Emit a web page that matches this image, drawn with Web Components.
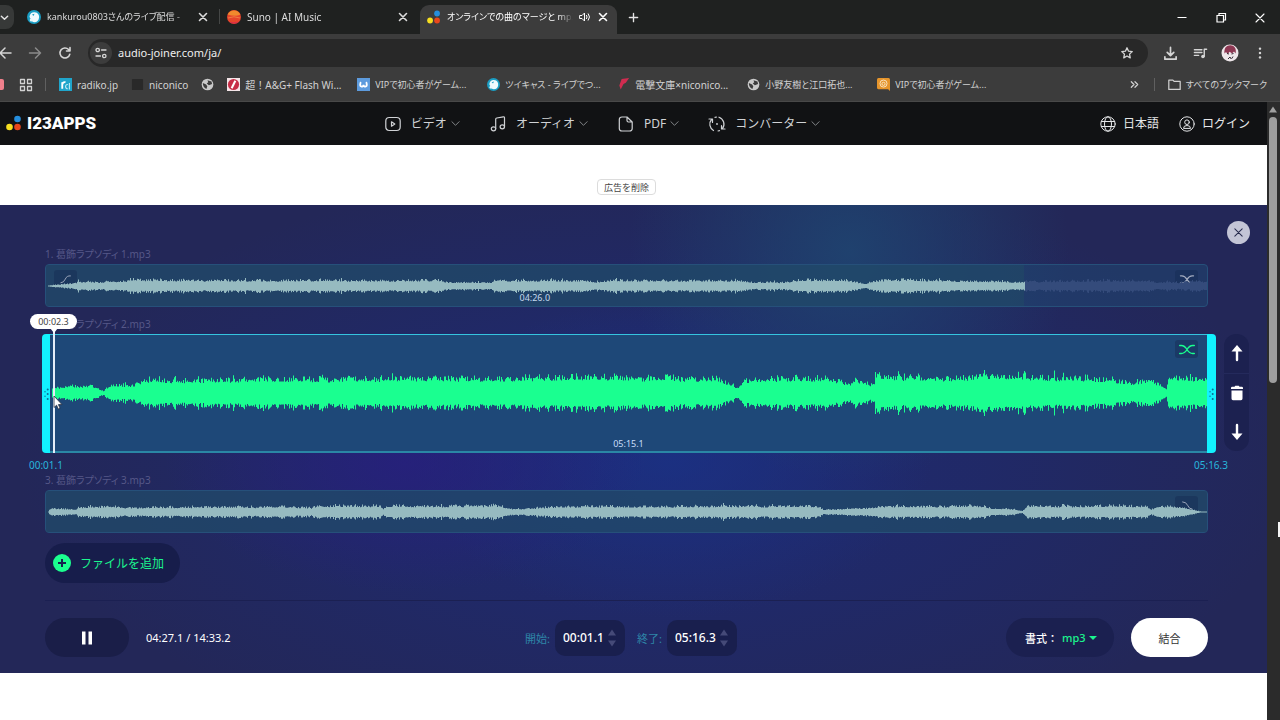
<!DOCTYPE html>
<html lang="ja">
<head>
<meta charset="utf-8">
<title>オンラインでの曲のマージと mp3</title>
<style>
  html, body { height: 100%; }
  body {
    margin: 0;
    display: flex; flex-direction: column;
    overflow: hidden;
    background: #fff;
    font-family: "Noto Sans", "Noto Sans CJK JP", sans-serif;
    font-size: 10px;
  }
  site-viewport { flex: 1; min-height: 0; }
</style>
</head>
<body>
  <browser-tabs></browser-tabs>
  <browser-toolbar></browser-toolbar>
  <bookmark-bar></bookmark-bar>
  <site-viewport>
    <site-header></site-header>
    <ad-strip></ad-strip>
    <joiner-editor></joiner-editor>
  </site-viewport>

<script>
'use strict';

// ── Icons ────────────────────────────────────────────────────────────
// [viewBox, markup]; strokes use currentColor
const LINE = 'fill="none" stroke="currentColor" stroke-linecap="round" stroke-linejoin="round"';
const ICONS = {
  chevron: ['0 0 10 10', `<path d="M1.500 3.500 5 7l3.500-3.500" ${LINE} stroke-width="1.600"/>`],
  caret: ['0 0 10 10', `<path d="M1 3l4 4 4-4" ${LINE}/>`],
  close: ['0 0 12 12', `<path d="M2.500 2.500l7 7M9.500 2.500l-7 7" ${LINE} stroke-width="1.600"/>`],
  closethin: ['0 0 12 12', `<path d="M2 2l8 8M10 2l-8 8" ${LINE} stroke-width="1.100"/>`],
  plus: ['0 0 12 12', `<path d="M6 1.500v9M1.500 6h9" ${LINE} stroke-width="1.500"/>`],
  minimize: ['0 0 12 12', `<path d="M1.500 5.500h9" stroke="currentColor"/>`],
  restore: ['0 0 12 12', `<path d="M2 3.500h6.500V10H2zM4 3.500v-2h6.500V8h-2" fill="none" stroke="currentColor" stroke-width="1.200"/>`],
  sound: ['0 0 12 12', `<path d="M1 4.500h2L5.500 2v8L3 7.500H1z" ${LINE}/><path d="M7.500 4.300q1.400 1.700 0 3.400M9.300 2.800q2.600 3.200 0 6.400" ${LINE}/>`],
  back: ['0 0 16 16', `<path d="M14 8H3M8 3 3 8l5 5" ${LINE} stroke-width="1.500"/>`],
  forward: ['0 0 16 16', `<path d="M2.500 8h11M8.500 3l5 5-5 5" ${LINE} stroke-width="1.500"/>`],
  reload: ['0 0 16 16', `<path d="M12.800 9.200A5 5 0 1 1 11.600 4.500L13 6M13 2.500V6H9.500" ${LINE} stroke-width="1.600"/>`],
  tune: ['0 0 14 14', `<circle cx="3.700" cy="4" r="1.700" ${LINE} stroke-width="1.300"/><path d="M7.500 4H12M2 10h4.500" ${LINE} stroke-width="1.300"/><circle cx="10.300" cy="10" r="1.700" ${LINE} stroke-width="1.300"/>`],
  star: ['0 0 16 16', `<path d="M8 2l1.800 3.900 4.200.5-3.100 2.900.8 4.200L8 11.400l-3.700 2.100.8-4.200L2 6.400l4.200-.5z" ${LINE} stroke-width="1.500"/>`],
  download: ['0 0 16 16', `<path d="M8 1.500v8.500M4.500 6.700 8 10.200l3.500-3.500M2 11.500V14h12v-2.500" ${LINE} stroke-width="1.800"/>`],
  queue: ['0 0 16 16', `<path d="M1.500 4h8M1.500 7h8M1.500 10h4.500M12 11V3.500h2.500" ${LINE} stroke-width="1.500"/><circle cx="10.600" cy="11.200" r="1.900" fill="currentColor"/>`],
  kebab: ['0 0 16 16', `<g fill="currentColor"><circle cx="8" cy="3" r="1.400"/><circle cx="8" cy="8" r="1.400"/><circle cx="8" cy="13" r="1.400"/></g>`],
  avatar: ['0 0 18 18', `<circle cx="9" cy="9" r="8.500" fill="#eee7ea"/><path d="M3.500 9.500C2.800 4 5.500 1.200 9.300 1.200s6.400 3 5.300 8.200L13 7.500l-2 2-2.300-1.800L6.500 10 5 8z" fill="#8d3853"/><path d="M6 9.500l2 .5m2.500 0 2-.5M9 13l1.200 2M7 15l2-2M12 12.500l-1.300 2.200" stroke="#342b35" fill="none"/>`],
  apps: ['0 0 14 14', `<path d="M1.500 1.500h4v4h-4zM8.500 1.500h4v4h-4zM1.500 8.500h4v4h-4zM8.500 8.500h4v4h-4z" ${LINE} stroke-width="1.300"/>`],
  folder: ['0 0 16 16', `<path d="M1 2.500h5l1.500 1.700H15V14H1z" ${LINE} stroke-width="1.500"/>`],
  more: ['0 0 12 12', `<path d="M2.500 3 5.500 6l-3 3M6.500 3l3 3-3 3" ${LINE} stroke-width="1.300"/>`],
  earth: ['0 0 14 14', `<circle cx="7" cy="7" r="6.300" fill="#c9c9c9"/><path d="M2 5.500 5.500 7l1.300 2-1 2.800C3.500 11 1.900 8.500 2 5.500M7 2.500l4.300 1.200.6 2.800-3.400 1.300L6.200 6l1.600-1.500z" fill="#3c3c3c"/>`],
  radiko: ['0 0 14 14', `<path d="M0 0h14v14H0z" fill="#20a5cb"/><path d="M3.500 11.500v-7M3.500 7Q4 4 7 4.500" stroke="#fff" stroke-width="2" fill="none"/><path d="M9.500 7a2 2.300 0 1 0 0 4.500M11.200 5.500v7" stroke="#bdeaf4" fill="none" stroke-width="1.200"/>`],
  blank: ['0 0 14 14', `<rect x="1" y="1" width="12" height="12" rx="1" fill="#292929"/>`],
  agqr: ['0 0 14 14', `<path d="M0 0h14v14H0z" fill="#f4e5e8"/><circle cx="7" cy="7" r="6" fill="#c72d46"/><path d="M5 11 9 3" stroke="#fff" stroke-width="2.200"/>`],
  wiki: ['0 0 14 14', `<path d="M0 0h14v14H0z" fill="#5d9bdd"/><path d="M3.800 5C2.300 9.800 6.400 10.500 7 7.500c.6 3 4.700 2.300 3.200-2.500" fill="none" stroke="#fff" stroke-linecap="round" stroke-width="1.900"/>`],
  cas: ['0 0 14 14', `<circle cx="7" cy="7" r="7" fill="#1b9ec4"/><path d="M2.500 6.500C3 3.500 5 2 7.500 2.200 11 2.500 12.500 5 12 8c-.4 2.500-2 4.200-4.500 4.200S5 11 5 10 3.300 9.500 2.500 6.500z" fill="#f0fafd"/><circle cx="4.300" cy="10" r="1.600" fill="#eaf8fb"/><path d="M5 4.500l2.500-.8-1 2.300z" fill="#1b9ec4"/>`],
  dengeki: ['0 0 14 14', `<path d="M5 1 13 0 9.500 5 7 6.500 4 12.500 2.500 8z" fill="#d02c50"/>`],
  amber: ['0 0 14 14', `<path d="M1.500 0h11Q14 0 14 2v12l-2-2H1.500Q0 12 0 10.500V2Q0 0 1.500 0z" fill="#e6952c"/><circle cx="7" cy="6" r="3.800" fill="none" stroke="#fae5c6"/><circle cx="7" cy="6.300" r="1.700" fill="none" stroke="#fae5c6"/>`],
  suno: ['0 0 14 14', `<circle cx="7" cy="7" r="7" fill="#e6452b"/><path d="M.7 4.500A7 7 0 0 1 13.300 4.500Q9 7 .7 4.500z" fill="#f08a2d"/><path d="M1 8q6-2.500 12 0" stroke="#f07c42" fill="none"/><path d="M2 11.500q5 2 10-.3A7 7 0 0 1 2 11.500z" fill="#d52554"/>`],
  dots: ['0 0 16 16', `<circle cx="11.500" cy="4" r="3.300" fill="#258ede"/><circle cx="3.500" cy="12" r="3.300" fill="#f7df20"/><circle cx="11.500" cy="12" r="3.300" fill="#e8471c"/>`],
  video: ['0 0 16 16', `<rect x=".8" y="1.500" width="14.400" height="13" rx="3.500" ${LINE} stroke-width="1.200"/><path d="M6.500 5.800v4.400L9.800 8z" ${LINE} stroke-width="1.200"/>`],
  music: ['0 0 16 16', `<path d="M5.700 12.500V3.300Q5.700 2.200 6.800 2l6.500-1.200q1.200-.2 1.200 1v8.700" ${LINE} stroke-width="1.200"/><ellipse cx="3.500" cy="12.800" rx="2.200" ry="2" ${LINE} stroke-width="1.200"/><ellipse cx="12.300" cy="10.800" rx="2.200" ry="2" ${LINE} stroke-width="1.200"/>`],
  page: ['0 0 16 16', `<path d="M9 1H4Q1.300 1 1.300 3.500v9Q1.300 15 4 15h7.500q2.700 0 2.700-2.500V6zM9 1v3.500Q9 6 10.500 6h3.700" ${LINE} stroke-width="1.200"/>`],
  convert: ['0 0 16 16', `<path d="M4.500 14.500A7.300 7.300 0 0 1 2.500 3.500M3.500 6.500V3H0M6 1.300l1.500-.3M10 1.200a7.300 7.300 0 0 1 3.500 11.300M12.500 9.500V13H16M10.500 14.700l-1.500.3" ${LINE} stroke-width="1.200"/><circle cx="8" cy="8" r=".9" fill="currentColor"/>`],
  globe: ['0 0 16 16', `<circle cx="8" cy="8" r="7.200" ${LINE}/><ellipse cx="8" cy="8" rx="3.500" ry="7.200" ${LINE}/><path d="M1.500 5.500h13M1.500 10.500h13" ${LINE}/>`],
  user: ['0 0 16 16', `<circle cx="8" cy="8" r="7.200" ${LINE}/><circle cx="8" cy="6.200" r="2.300" ${LINE}/><path d="M4.500 12q0-2.500 3.500-2.500t3.500 2.500z" ${LINE}/>`],
  cross: ['0 0 22 16', `<path d="M2 3h2q4 0 7 5t7 5h2M2 13h2q4 0 7-5t7-5h2" ${LINE} stroke-width="1.700"/>`],
  fadein: ['0 0 22 16', `<path d="M4 12.500q4 0 6-5t7-4.500" ${LINE} stroke-width="1.300"/>`],
  fadeout: ['0 0 22 16', `<path d="M5 3q5 0 7 5t6 5" ${LINE} stroke-width="1.300"/>`],
  up: ['0 0 14 16', `<path d="M7 15V5" stroke="currentColor" stroke-width="2.400" stroke-linecap="round"/><path d="M7 0l5.500 6.500h-11z" fill="currentColor"/>`],
  down: ['0 0 14 16', `<path d="M7 1v10" stroke="currentColor" stroke-width="2.400" stroke-linecap="round"/><path d="M7 16l5.500-6.500h-11z" fill="currentColor"/>`],
  trash: ['0 0 14 16', `<path d="M1 4V3q0-1.300 1.300-1.300H4.500L5.300.8h3.400l.8.900h2.200Q13 1.700 13 3v1zM1.500 5.500h11v8Q12.500 15.200 11 15.200H3q-1.500 0-1.500-1.700z" fill="currentColor"/>`],
  pause: ['0 0 12 14', `<path d="M1 .5h3.500v13H1zM7.500.5H11v13H7.500z" fill="currentColor"/>`],
  add: ['0 0 18 18', `<circle cx="9" cy="9" r="9" fill="#1bff8f"/><path d="M9 5v8M5 9h8" stroke="#17204f" stroke-width="2"/>`],
  tri: ['0 0 8 6', `<path d="M0 1h8L4 5z" fill="currentColor"/>`],
  spinup: ['0 0 8 7', `<path d="M4 .5 8 6.500H0z" fill="currentColor"/>`],
  spindown: ['0 0 8 7', `<path d="M4 6.500 8 .5H0z" fill="currentColor"/>`],
  grip: ['0 0 5 14', `<g fill="#0b6f97"><circle cx="3.700" cy="2.500" r="1"/><circle cx="1" cy="4.700" r=".7"/><circle cx="3.700" cy="7" r="1"/><circle cx="1" cy="9.300" r=".7"/><circle cx="3.700" cy="12" r="1"/></g>`],
  pointer: ['0 0 10 15', `<path d="M1 1v11.500l2.600-2.300 1.700 3.900 1.800-.8-1.700-3.700H9z" fill="#fff" stroke="#2a3142" stroke-width=".8"/>`]
};

class BaseElement extends HTMLElement {
  connectedCallback() {
    if (this.shadowRoot) return;
    this.attachShadow({ mode: 'open' });
    this.shadowRoot.innerHTML = `
      <style>
        *, :host { box-sizing: border-box; }
        button, input, select { margin: 0; border: 0; padding: 0; background: none; font: inherit; color: inherit; }
        button { display: flex; align-items: center; justify-content: center; cursor: pointer; }
        a { color: inherit; text-decoration: none; }
      </style>
      ${this.render()}`;
  }
  attr(name, fallback = '') { return this.getAttribute(name) || fallback; }
}

class UiIcon extends BaseElement {
  render() {
    const [box, body] = ICONS[this.attr('name')];
    const w = this.attr('w', '14');
    const h = this.attr('h', w);
    return `
      <style>:host { display: block; flex: none; width: ${w}px; height: ${h}px; } svg { display: block; overflow: visible; }</style>
      <svg viewBox="${box}" width="${w}" height="${h}" aria-hidden="true">${body}</svg>`;
  }
}

// ── Browser chrome ───────────────────────────────────────────────────
class BrowserTab extends BaseElement {
  render() {
    return `
      <style>
        :host {
          display: flex; align-items: center; gap: 6px;
          width: 200px; height: 29px; padding: 0 11px 6px 7px;
          color: #dcdcdc;
        }
        :host([active]) { background: #3c3c3c; border-radius: 9px 9px 0 0; width: 197px; padding-right: 8px; color: #fff; }
        :host([dense]) { font-size: 9px; }
        .title {
          flex: 1; min-width: 0; overflow: hidden; white-space: nowrap; line-height: 16px;
          font-feature-settings: "palt";
          -webkit-mask-image: linear-gradient(to right, #000 88%, transparent);
          mask-image: linear-gradient(to right, #000 88%, transparent);
        }
      </style>
      <ui-icon name="${this.attr('icon')}"></ui-icon>
      <span class="title"><slot></slot></span>
      ${this.hasAttribute('sound') ? '<ui-icon name="sound" w="12"></ui-icon>' : ''}
      <button class="close" aria-label="閉じる"><ui-icon name="close" w="12"></ui-icon></button>`;
  }
}

class BrowserTabs extends BaseElement {
  render() {
    return `
      <style>
        :host { display: flex; align-items: flex-end; height: 34px; background: #1f2120; color: #e4e4e4; }
        .list { width: 14px; height: 24px; margin: 0 6px 5px 0; background: #373938; border-radius: 0 8px 8px 0; justify-content: flex-start; }
        .sep { width: 1px; height: 15px; background: #454746; margin: 0 0 10px -1px; }
        .new { width: 33px; height: 34px; }
        .window { margin-left: auto; display: flex; padding-right: 1px; }
        .window button { width: 39px; height: 33px; color: #fff; }
      </style>
      <button class="list" aria-label="タブを検索"><ui-icon name="chevron" w="9"></ui-icon></button>
      <browser-tab icon="cas" dense>kankurou0803さんのライブ配信 -</browser-tab>
      <span class="sep"></span>
      <browser-tab icon="suno">Suno | AI Music</browser-tab>
      <browser-tab icon="dots" active sound dense>オンラインでの曲のマージと mp3</browser-tab>
      <button class="new" aria-label="新しいタブ"><ui-icon name="plus" w="11"></ui-icon></button>
      <div class="window">
        <button aria-label="最小化"><ui-icon name="minimize" w="12"></ui-icon></button>
        <button aria-label="元に戻す"><ui-icon name="restore" w="12"></ui-icon></button>
        <button aria-label="閉じる"><ui-icon name="closethin" w="12"></ui-icon></button>
      </div>`;
  }
}

class BrowserToolbar extends BaseElement {
  render() {
    return `
      <style>
        :host { display: flex; align-items: center; height: 38px; padding-right: 5px; background: #3c3c3c; color: #d5d5d5; overflow: hidden; }
        .nav { display: flex; gap: 14px; margin-left: -3px; margin-right: 15px; }
        .nav .off { color: #8b8b8b; }
        .omnibox {
          flex: 1; display: flex; align-items: center; gap: 6px;
          height: 28px; padding: 0 14px 0 2px; border-radius: 14px; background: #282828;
        }
        .site { width: 22px; height: 22px; border-radius: 50%; background: #3c3c3c; }
        input { flex: 1; min-width: 0; font-size: 11px; line-height: 20px; color: #eee; outline: none; }
        .tools { display: flex; align-items: center; margin-left: 7px; }
        .tools button { width: 30px; height: 30px; }
      </style>
      <div class="nav">
        <button aria-label="戻る"><ui-icon name="back" w="16"></ui-icon></button>
        <button aria-label="進む" class="off"><ui-icon name="forward" w="16"></ui-icon></button>
        <button aria-label="再読み込み"><ui-icon name="reload" w="16"></ui-icon></button>
      </div>
      <div class="omnibox">
        <button class="site" aria-label="サイト情報"><ui-icon name="tune" w="14"></ui-icon></button>
        <input type="text" aria-label="アドレス" value="audio-joiner.com/ja/">
        <button aria-label="ブックマーク"><ui-icon name="star" w="14"></ui-icon></button>
      </div>
      <div class="tools">
        <button aria-label="ダウンロード"><ui-icon name="download" w="15"></ui-icon></button>
        <button aria-label="メディア"><ui-icon name="queue" w="15"></ui-icon></button>
        <button aria-label="プロフィール"><ui-icon name="avatar" w="18"></ui-icon></button>
        <button aria-label="メニュー"><ui-icon name="kebab" w="14"></ui-icon></button>
      </div>`;
  }
}

class BookmarkItem extends BaseElement {
  render() {
    return `
      <style>
        :host { display: block; white-space: nowrap; line-height: 16px; }
        :host([long]) { flex: none; width: 117px; }
        :host([dense]) { font-size: 9px; font-feature-settings: "palt"; }
        a { display: flex; align-items: center; gap: 5px; min-height: 16px; }
      </style>
      <a href="#"><ui-icon name="${this.attr('icon')}" w="13"></ui-icon><slot></slot></a>`;
  }
}

class BookmarkBar extends BaseElement {
  render() {
    return `
      <style>
        :host {
          display: flex; align-items: center; height: 30px; padding: 0 13px 4px 0;
          background: #3c3c3c; border-bottom: 1px solid #484848; color: #d2d2d2;
          overflow: hidden;
        }
        .cut { width: 4px; height: 11px; background: #f0808c; border-radius: 0 2px 2px 0; margin-right: 15px; }
        .sep { width: 1px; height: 13px; background: #606060; margin: 0 13px 0 12px; }
        .last { margin: 0 13px 0 14px; }
        .items { display: flex; gap: 13px; flex: 1; min-width: 0; }
      </style>
      <span class="cut"></span>
      <ui-icon name="apps" w="14"></ui-icon>
      <span class="sep"></span>
      <div class="items">
        <bookmark-item icon="radiko">radiko.jp</bookmark-item>
        <bookmark-item icon="blank">niconico</bookmark-item>
        <bookmark-item icon="earth"></bookmark-item>
        <bookmark-item icon="agqr" long>超！A&amp;G+ Flash Wi...</bookmark-item>
        <bookmark-item icon="wiki" long dense>VIPで初心者がゲーム...</bookmark-item>
        <bookmark-item icon="cas" long dense>ツイキャス - ライブでつ...</bookmark-item>
        <bookmark-item icon="dengeki" long>電撃文庫×niconico...</bookmark-item>
        <bookmark-item icon="earth" long dense>小野友樹と江口拓也...</bookmark-item>
        <bookmark-item icon="amber" long dense>VIPで初心者がゲーム...</bookmark-item>
      </div>
      <button aria-label="その他"><ui-icon name="more" w="11"></ui-icon></button>
      <span class="sep last"></span>
      <bookmark-item icon="folder" dense>すべてのブックマーク</bookmark-item>`;
  }
}

// ── Page ─────────────────────────────────────────────────────────────
class SiteViewport extends BaseElement {
  render() {
    return `
      <style>
        :host { display: flex; background: #fff; }
        .page { flex: 1; min-width: 0; overflow: hidden; }
        .scroll {
          position: relative; width: 13px; padding-right: 1px; background: #2b2b2b; color: #a0a0a0;
          display: flex; flex-direction: column; align-items: center; overflow: hidden;
        }
        .scroll ui-icon { margin: 4px 0 4px; }
        .thumb { width: 8px; height: 43%; border-radius: 4px; background: #9e9e9e; }
        .mark { position: absolute; right: 0; top: 68%; width: 2px; height: 15px; background: #f5f5f5; }
      </style>
      <div class="page"><slot></slot></div>
      <div class="scroll">
        <ui-icon name="spinup" w="8" h="7"></ui-icon>
        <span class="thumb"></span>
        <span class="mark"></span>
      </div>`;
  }
}

class NavItem extends BaseElement {
  render() {
    return `
      <style>
        :host { display: block; white-space: nowrap; }
        a { display: flex; align-items: center; line-height: 18px; }
        .label { margin-left: var(--nav-gap, 10px); }
        .caret { margin-left: 4px; color: #8f9194; }
      </style>
      <a href="#">
        <ui-icon name="${this.attr('icon')}" w="16"></ui-icon>
        <span class="label"><slot></slot></span>
        ${this.hasAttribute('menu') ? '<ui-icon class="caret" name="caret" w="9"></ui-icon>' : ''}
      </a>`;
  }
}

class SiteHeader extends BaseElement {
  render() {
    return `
      <style>
        :host {
          display: flex; align-items: center; justify-content: space-between;
          height: 43px; padding: 0 17px 0 6px;
          background: #111214; color: #d0d2d5; font-size: 12px;
        }
        .logo { display: flex; align-items: center; gap: 5px; padding: 0 9px 2px 0; color: #fff; font: 900 17px/20px Roboto, sans-serif; }
        nav { display: flex; gap: 30px; }
        .account { gap: 20px; --nav-gap: 7px; color: #e6e7e9; }
      </style>
      <a class="logo" href="#"><ui-icon name="dots" w="16"></ui-icon>I23APPS</a>
      <nav>
        <nav-item icon="video" menu>ビデオ</nav-item>
        <nav-item icon="music" menu>オーディオ</nav-item>
        <nav-item icon="page" menu>PDF</nav-item>
        <nav-item icon="convert" menu>コンバーター</nav-item>
      </nav>
      <nav class="account">
        <nav-item icon="globe">日本語</nav-item>
        <nav-item icon="user">ログイン</nav-item>
      </nav>`;
  }
}

class AdStrip extends BaseElement {
  render() {
    return `
      <style>
        :host { display: flex; justify-content: center; align-items: flex-end; height: 60px; padding: 0 59px 10px 45px; background: #fff; }
        button { height: 16px; padding: 0 6px; border: 1px solid #dcdcdc; border-radius: 4px; background: #fff; color: #444; font-size: 9px; }
      </style>
      <button>広告を削除</button>`;
  }
}

/**
 * <wave-form env="x:amp x:amp ..." span="1163" tall="40" trim="979">
 * Envelope points are interpolated and given a repeatable jitter.
 */
class WaveForm extends BaseElement {
  render() {
    const span = Number(this.attr('span'));
    const tall = Number(this.attr('tall'));
    const trim = Number(this.attr('trim', String(span)));
    const pts = this.attr('env').split(' ').map(p => p.split(':').map(Number));
    let seed = Number(this.attr('seed', '7'));
    const rnd = () => (seed = (seed * 16807) % 2147483647) / 2147483647;
    const ampAt = x => {
      const i = pts.findIndex(p => p[0] >= x);
      if (i < 0) return pts[pts.length - 1][1];
      if (i === 0) return pts[0][1];
      const [x0, a0] = pts[i - 1], [x1, a1] = pts[i];
      return a0 + (a1 - a0) * (x - x0) / (x1 - x0);
    };
    const mid = tall / 2;
    const bars = { kept: '', cut: '' };
    let drift = 1;
    for (let x = pts[0][0]; x < span; x++) {
      if (x % 5 === 0) drift = 0.92 + rnd() * 0.16;
      const r = rnd();
      const spike = rnd() > 0.93 ? 0.2 : 0;
      const a = Math.max(0.4, ampAt(x) * drift * (0.76 + r * r * 0.38 + spike));
      bars[x < trim ? 'kept' : 'cut'] += `M${x} ${(mid - a).toFixed(1)}h1v${(a * 2).toFixed(1)}h-1z`;
    }
    return `
      <style>
        :host { display: block; }
        svg { display: block; width: 100%; height: 100%; }
        .kept { fill: var(--wave, #96bac0); }
        .cut { fill: #344b7b; }
      </style>
      <svg viewBox="0 0 ${span} ${tall}" preserveAspectRatio="none" aria-hidden="true">
        <path class="kept" d="${bars.kept}"/><path class="cut" d="${bars.cut}"/>
      </svg>`;
  }
}

class FadeButton extends BaseElement {
  render() {
    return `
      <style>
        :host { display: block; position: absolute; }
        button { width: 23px; height: 18px; border-radius: 3px; background: rgba(22, 44, 84, .5); }
      </style>
      <button aria-label="フェード"><ui-icon name="${this.attr('icon')}" w="${this.attr('w', '16')}" h="13"></ui-icon></button>`;
  }
}

class AudioTrack extends BaseElement {
  render() {
    return `
      <style>
        :host { display: grid; grid-template-columns: 45px 1fr 59px; margin-bottom: 10px; }
        .name { grid-column: 2; line-height: 14px; margin-bottom: 3px; color: #565888; font-feature-settings: "palt"; }
        .box {
          grid-column: 2; position: relative; height: 43px;
          border: 1px solid #26507a; border-radius: 4px; background: rgba(32, 74, 116, .5);
          display: flex; align-items: center; color: #a2abbf;
        }
        .kept { position: absolute; inset: 0 auto 0 0; width: var(--kept, 100%); background: rgba(33, 74, 102, .6); display: flex; justify-content: center; align-items: flex-end; }
        wave-form { flex: 1; height: 40px; position: relative; }
        .time { position: relative; z-index: 1; font-size: 9px; line-height: 16px; color: #c5d9ee; }
        .left { left: 8px; top: 5px; }
        .right { right: 9px; top: 5px; }
      </style>
      <div class="name"><slot></slot></div>
      <div class="box" style="--kept: ${this.attr('kept', '100%')}">
        <div class="kept"><span class="time">${this.attr('time')}</span></div>
        ${this.hasAttribute('fadein') ? '<fade-button class="left" icon="fadein"></fade-button>' : ''}
        ${this.hasAttribute('end') ? `<fade-button class="right" icon="${this.attr('end')}"></fade-button>` : ''}
        <wave-form span="1161" tall="40" seed="${this.attr('seed')}" trim="${this.attr('trim', '1161')}" env="${this.attr('env')}"></wave-form>
      </div>`;
  }
}

class SelectedTrack extends BaseElement {
  render() {
    return `
      <style>
        :host { display: grid; grid-template-columns: 42px 1fr 51px; }
        .name { grid-column: 2; padding-left: 3px; line-height: 14px; margin-bottom: 3px; color: #565888; font-feature-settings: "palt"; }
        .box { grid-column: 2; position: relative; display: flex; height: 119px; --wave: #1aff90; }
        .handle { width: 8px; background: #12f2ff; justify-content: center; }
        .handle:first-child { border-radius: 4px 0 0 4px; }
        .handle:last-child { border-radius: 0 4px 4px 0; width: 9px; }
        .body {
          flex: 1; display: grid; grid-template-rows: 100%; position: relative;
          background: #1e4878; border-top: 1px solid #35c4df; border-bottom: 2px solid #2a87a5;
        }
        wave-form { height: 100%; }
        .time { position: absolute; inset: auto 0 0; text-align: center; font-size: 9px; line-height: 15px; color: #c8defa; }
        fade-button { right: 9px; top: 5px; color: #1aff90; }
        .playhead { position: absolute; left: 11px; top: -4px; bottom: 0; width: 2px; background: #e4edf8; }
        .bubble {
          position: absolute; left: -12px; top: -20px; width: 47px; height: 15px;
          border-radius: 8px; background: #fff; color: #444; font-size: 9px; line-height: 15px; text-align: center;
        }
        .bubble::after { content: ""; position: absolute; left: 20px; top: 14px; border: 4px solid transparent; border-top: 5px solid #fff; border-bottom: 0; }
        .pointer { position: absolute; left: 11px; top: 61px; }
        .tools {
          grid-column: 3; justify-self: start; margin-left: 8px;
          display: flex; flex-direction: column;
          width: 25px; height: 117px; border-radius: 12px; background: #1c2150; color: #fff;
        }
        .tools button { flex: 1; }
        .tools button:first-child { border-bottom: 1px solid #242a5c; }
        .range {
          grid-column: 1 / -1; display: flex; justify-content: space-between;
          padding: 4px 39px 0 29px; line-height: 16px; color: #28b6db;
        }
      </style>
      <div class="name"><slot></slot></div>
      <div class="box">
        <button class="handle" aria-label="開始位置"><ui-icon name="grip" w="5" h="14"></ui-icon></button>
        <div class="body">
          <wave-form span="1157" tall="116" seed="${this.attr('seed')}" env="${this.attr('env')}"></wave-form>
          <span class="time">${this.attr('time')}</span>
          <fade-button icon="cross" w="20"></fade-button>
        </div>
        <span class="playhead"></span>
        <span class="bubble">${this.attr('playhead')}</span>
        <ui-icon class="pointer" name="pointer" w="10" h="15"></ui-icon>
        <button class="handle" aria-label="終了位置"><ui-icon name="grip" w="5" h="14"></ui-icon></button>
      </div>
      <div class="tools">
        <button aria-label="上へ"><ui-icon name="up" w="14" h="16"></ui-icon></button>
        <button aria-label="削除"><ui-icon name="trash" w="14" h="16"></ui-icon></button>
        <button aria-label="下へ"><ui-icon name="down" w="14" h="16"></ui-icon></button>
      </div>
      <div class="range"><span>${this.attr('from')}</span><span>${this.attr('to')}</span></div>`;
  }
}

class TimeField extends BaseElement {
  render() {
    return `
      <style>
        :host { display: flex; align-items: center; gap: 5px; font-size: 11px; }
        label { color: #2e86a8; white-space: nowrap; }
        .box { display: flex; align-items: center; width: 70px; height: 36px; padding: 0 9px 0 8px; border-radius: 10px; background: #191f4e; }
        input { flex: 1; min-width: 0; width: 0; font-size: 12px; font-weight: 500; color: #fff; outline: none; }
        .spin { display: flex; flex-direction: column; gap: 4px; color: #454a78; }
      </style>
      <label for="value">${this.attr('label')}</label>
      <div class="box">
        <input id="value" type="text" value="${this.attr('value')}">
        <div class="spin">
          <button aria-label="増やす"><ui-icon name="spinup" w="8" h="7"></ui-icon></button>
          <button aria-label="減らす"><ui-icon name="spindown" w="8" h="7"></ui-icon></button>
        </div>
      </div>`;
  }
}

class EditorFooter extends BaseElement {
  render() {
    return `
      <style>
        :host {
          display: grid; grid-template-columns: 1fr auto 1fr; align-items: center;
          margin: 17px 59px 0 45px; padding-top: 17px;
          border-top: 1px solid #1b2052; color: #fff; font-size: 11px;
        }
        .play, .fields, .output { display: flex; align-items: center; }
        .play { gap: 17px; }
        .fields { gap: 12px; padding-left: 9px; }
        .output { gap: 17px; justify-content: flex-end; }
        .pause { width: 84px; height: 39px; border-radius: 20px; background: #1a1e48; }
        .format {
          display: flex; align-items: center; width: 108px; height: 39px; padding: 0 17px 0 19px;
          border-radius: 20px; background: #1b2050;
        }
        .format label { flex: 1; white-space: nowrap; font-weight: 500; }
        select { appearance: none; outline: none; color: #1bf58e; font-weight: 500; margin-right: 3px; }
        .format ui-icon { color: #1bf58e; }
        .join { width: 77px; height: 39px; border-radius: 20px; background: #fff; color: #333; }
      </style>
      <div class="play">
        <button class="pause" aria-label="一時停止"><ui-icon name="pause" w="12" h="14"></ui-icon></button>
        <span>04:27.1 / 14:33.2</span>
      </div>
      <div class="fields">
        <time-field label="開始:" value="00:01.1"></time-field>
        <time-field label="終了:" value="05:16.3"></time-field>
      </div>
      <div class="output">
        <div class="format">
          <label for="format">書式：</label>
          <select id="format"><option>mp3</option></select>
          <ui-icon name="tri" w="8" h="6"></ui-icon>
        </div>
        <button class="join">結合</button>
      </div>`;
  }
}

const WAVES = {
  first: '2:.5 9:1.500 16:2 30:3 32:5 52:4 58:4 62:5 80:5 85:6.500 160:6 220:6 350:6 395:6 402:4 445:4 447:6 540:6 548:4 565:6 690:6 705:4 740:4 755:6.500 800:6 818:2.500 821:2.500 823:5 850:6.500 900:6 925:5 978:4.500 979:5 1100:6 1110:4 1140:4 1150:6 1161:4',
  second: '2:6 10:6 20:8 30:6 35:8 46:6 53:2 60:8 80:8 93:11 104:16 115:13 160:14 230:15 300:15 380:16 460:16 540:17 620:16 665:15 682:9 688:5 693:14 760:16 790:13 797:8 803:13 824:8 825:19 850:16 900:16 960:18 1010:16 1060:15 1080:11 1100:13 1110:9 1116:5 1118:18 1157:15',
  third: '2:.5 5:4 30:3 32:5 70:6 85:4 100:5 220:5.500 222:6 265:4.500 270:6.500 334:6.500 337:3 340:6.500 455:6.500 463:3.500 495:4 515:6 590:6 770:6.500 777:3 790:2.500 800:4 822:4 840:6 938:6.500 945:4 968:3 976:1 982:6.500 1100:6.500 1105:3 1115:6 1135:5 1148:2 1154:.6 1161:.4'
};

class JoinerEditor extends BaseElement {
  render() {
    return `
      <style>
        :host {
          display: block; position: relative; padding: 42px 0 16px;
          background:
            radial-gradient(ellipse 220px 230px at 67% 10%, rgba(31, 68, 112, .9), transparent),
            radial-gradient(ellipse 240px 130px at 32% 55%, rgba(40, 30, 128, .75), transparent),
            radial-gradient(ellipse 260px 160px at 53% 54%, rgba(26, 50, 134, .75), transparent),
            radial-gradient(ellipse 640px 300px at 52% 56%, rgba(31, 42, 116, .95), rgba(31, 42, 110, .7) 50%, transparent),
            #232758;
        }
        .close { position: absolute; right: 17px; top: 16px; width: 23px; height: 23px; border-radius: 50%; background: #c3c5d6; color: #262a4c; }
        .add {
          height: 40px; margin-left: 45px; padding: 0 16px 0 8px; gap: 9px;
          border-radius: 20px; background: #171d4b; color: #1bf58e; font-size: 12px;
        }
      </style>
      <button class="close" aria-label="閉じる"><ui-icon name="closethin" w="11"></ui-icon></button>
      <audio-track seed="11" time="04:26.0" kept="84.2%" trim="979" fadein end="cross" env="${WAVES.first}">1. 葛飾ラプソディ 1.mp3</audio-track>
      <selected-track seed="23" time="05:15.1" playhead="00:02.3" from="00:01.1" to="05:16.3" env="${WAVES.second}">2. 葛飾ラプソディ 2.mp3</selected-track>
      <audio-track seed="37" end="fadeout" env="${WAVES.third}">3. 葛飾ラプソディ 3.mp3</audio-track>
      <button class="add"><ui-icon name="add" w="18"></ui-icon>ファイルを追加</button>
      <editor-footer></editor-footer>`;
  }
}

customElements.define('ui-icon', UiIcon);
customElements.define('browser-tab', BrowserTab);
customElements.define('browser-tabs', BrowserTabs);
customElements.define('browser-toolbar', BrowserToolbar);
customElements.define('bookmark-item', BookmarkItem);
customElements.define('bookmark-bar', BookmarkBar);
customElements.define('nav-item', NavItem);
customElements.define('site-header', SiteHeader);
customElements.define('ad-strip', AdStrip);
customElements.define('wave-form', WaveForm);
customElements.define('fade-button', FadeButton);
customElements.define('audio-track', AudioTrack);
customElements.define('selected-track', SelectedTrack);
customElements.define('time-field', TimeField);
customElements.define('editor-footer', EditorFooter);
customElements.define('joiner-editor', JoinerEditor);
customElements.define('site-viewport', SiteViewport);
</script>
</body>
</html>
